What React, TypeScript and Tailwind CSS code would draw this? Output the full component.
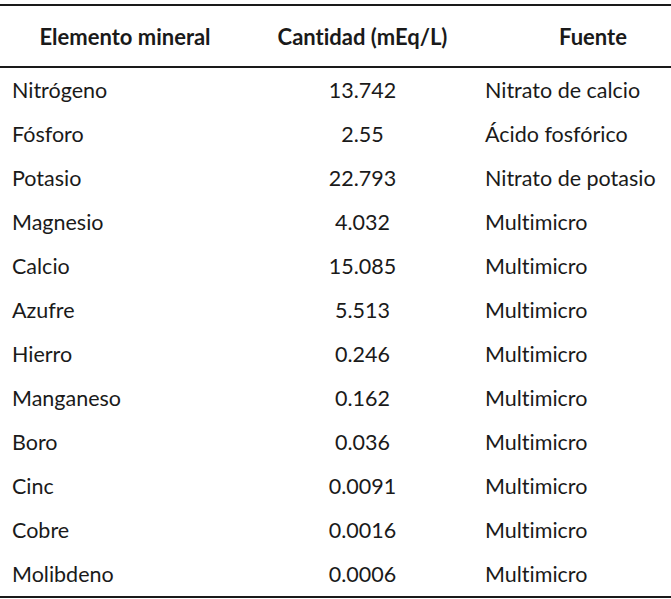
import React from 'react';

const rows: Array<[string, string, string]> = [
  ['Nitrógeno', '13.742', 'Nitrato de calcio'],
  ['Fósforo', '2.55', 'Ácido fosfórico'],
  ['Potasio', '22.793', 'Nitrato de potasio'],
  ['Magnesio', '4.032', 'Multimicro'],
  ['Calcio', '15.085', 'Multimicro'],
  ['Azufre', '5.513', 'Multimicro'],
  ['Hierro', '0.246', 'Multimicro'],
  ['Manganeso', '0.162', 'Multimicro'],
  ['Boro', '0.036', 'Multimicro'],
  ['Cinc', '0.0091', 'Multimicro'],
  ['Cobre', '0.0016', 'Multimicro'],
  ['Molibdeno', '0.0006', 'Multimicro'],
];

export default function App() {
  return (
    <div className="w-[671px] h-[599px] bg-white pt-[4px] text-[#1a1a1a] font-['Lato',sans-serif] [font-variant-ligatures:none]">
      <div className="border-t-2 border-b-2 border-[#1a1a1a]">
        {/* header */}
        <div className="grid grid-cols-[250px_225px_196px] h-[62px] items-center border-b-2 border-[#1a1a1a] text-[22px] font-bold">
          <div className="text-center">Elemento mineral</div>
          <div className="text-center">Cantidad (mEq/L)</div>
          <div className="text-center pl-10">Fuente</div>
        </div>
        {rows.map(([el, qty, src]) => (
          <div key={el} className="grid grid-cols-[250px_225px_196px] h-[44px] items-center text-[21.5px]">
            <div className="pl-3">{el}</div>
            <div className="text-center">{qty}</div>
            <div className="pl-[10px] whitespace-nowrap">{src}</div>
          </div>
        ))}
      </div>
    </div>
  );
}
